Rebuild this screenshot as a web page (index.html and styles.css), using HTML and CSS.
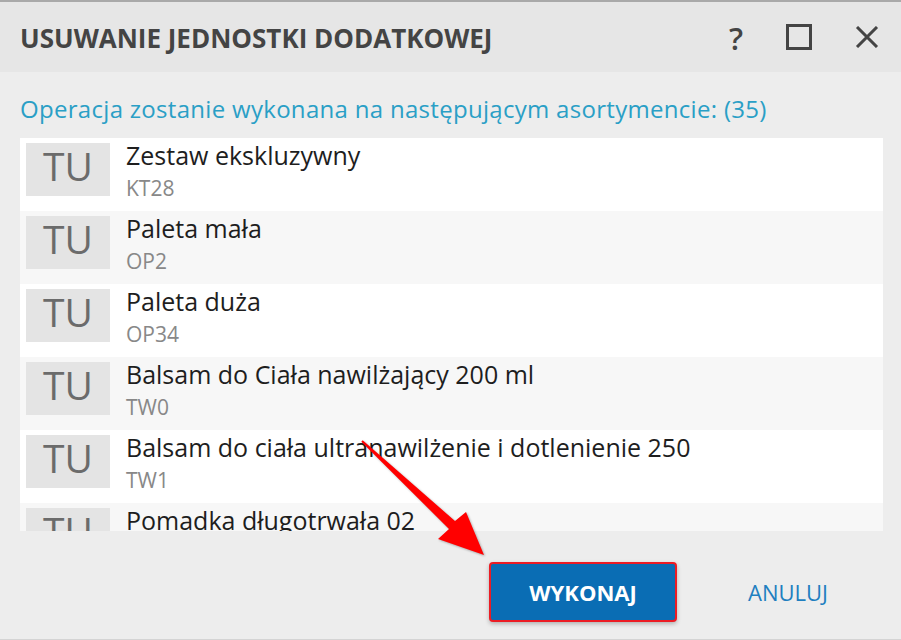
FILE: index.html
```html
<!DOCTYPE html>
<html lang="pl">
<head>
    <meta charset="UTF-8">
    <title>Usuwanie jednostki dodatkowej</title>
    <link rel="stylesheet" href="styles.css">
</head>
<body>

    <div class="dialog">
        <div class="dialog-header">
            <h1>USUWANIE JEDNOSTKI DODATKOWEJ</h1>
            <div class="header-icons">
                <span class="icon-help">?</span>
                <svg class="icon" width="26" height="26" viewBox="0 0 26 26">
                    <rect x="1.5" y="1.5" width="23" height="23" fill="none" stroke="#444" stroke-width="3"/>
                </svg>
                <svg class="icon" width="24" height="22" viewBox="0 0 24 22">
                    <path d="M2 1 L22 21 M22 1 L2 21" stroke="#444" stroke-width="3" fill="none"/>
                </svg>
            </div>
        </div>

        <div class="dialog-body">
            <p class="info">Operacja zostanie wykonana na następującym asortymencie: (35)</p>

            <div class="item-list">
                <div class="item">
                    <div class="unit">TU</div>
                    <div class="item-text">
                        <div class="item-name">Zestaw ekskluzywny</div>
                        <div class="item-code">KT28</div>
                    </div>
                </div>
                <div class="item">
                    <div class="unit">TU</div>
                    <div class="item-text">
                        <div class="item-name">Paleta mała</div>
                        <div class="item-code">OP2</div>
                    </div>
                </div>
                <div class="item">
                    <div class="unit">TU</div>
                    <div class="item-text">
                        <div class="item-name">Paleta duża</div>
                        <div class="item-code">OP34</div>
                    </div>
                </div>
                <div class="item">
                    <div class="unit">TU</div>
                    <div class="item-text">
                        <div class="item-name">Balsam do Ciała nawilżający 200 ml</div>
                        <div class="item-code">TW0</div>
                    </div>
                </div>
                <div class="item">
                    <div class="unit">TU</div>
                    <div class="item-text">
                        <div class="item-name">Balsam do ciała ultranawilżenie i dotlenienie 250</div>
                        <div class="item-code">TW1</div>
                    </div>
                </div>
                <div class="item">
                    <div class="unit">TU</div>
                    <div class="item-text">
                        <div class="item-name">Pomadka długotrwała 02</div>
                        <div class="item-code">TW2</div>
                    </div>
                </div>
            </div>
        </div>

        <div class="dialog-footer">
            <button class="btn-primary">WYKONAJ</button>
            <button class="btn-link">ANULUJ</button>
        </div>

        <!-- red annotation arrow -->
        <svg class="arrow" width="901" height="640" viewBox="0 0 901 640">
            <polygon points="362.7,440.3 455,521 466,512 484,555 438,539 449,529 361.3,441.7" fill="#ff0000"/>
        </svg>
    </div>

</body>
</html>
```

FILE: styles.css
```css
body {
    margin: 0;
    background: #ededed;
    font-family: 'Open Sans', 'Noto Sans', sans-serif;
}

.dialog {
    position: relative;
    width: 901px;
    height: 640px;
    background: #ededed;
    border-top: 2px solid #a9a9a9;
    border-bottom: 1px solid #d4d4d4;
    box-sizing: border-box;
    overflow: hidden;
}

/* Header */
.dialog-header {
    height: 70px;
    background: #e6e6e6;
    display: flex;
    align-items: center;
    justify-content: space-between;
    padding: 0 22px 0 20px;
}

.dialog-header h1 {
    margin: 2px 0 0;
    font-size: 26px;
    font-weight: 700;
    color: #444;
}

.header-icons {
    display: flex;
    align-items: center;
    gap: 43px;
}

.icon-help {
    font-size: 31px;
    font-weight: 600;
    color: #444;
    margin-top: 2px;
}

/* Body */
.dialog-body {
    padding: 21px 18px 0 20px;
}

.info {
    margin: 0 0 13px;
    font-size: 24px;
    line-height: 32px;
    letter-spacing: 0.3px;
    color: #2a9fc6;
}

.item-list {
    height: 393px;
    overflow: hidden;
}

.item {
    display: flex;
    height: 73px;
    background: #fff;
}

.item:nth-child(even) {
    background: #f7f7f7;
}

.unit {
    flex: none;
    width: 84px;
    height: 53px;
    margin: 5px 16px 0 6px;
    background: #e4e4e4;
    color: #6b6b6b;
    font-size: 39px;
    line-height: 45px;
    text-align: center;
}

.item-name {
    font-size: 25px;
    line-height: 30px;
    color: #1e1e1e;
    margin-top: 2px;
}

.item-code {
    font-size: 21px;
    line-height: 26px;
    color: #888;
    margin-top: 5px;
}

/* Footer */
.dialog-footer {
    display: flex;
    justify-content: flex-end;
    align-items: center;
    padding: 31px 0 0;
}

.btn-primary {
    width: 188px;
    height: 60px;
    background: #0a6db4;
    border: 2px solid #ec1c24;
    border-radius: 4px;
    color: #fff;
    font-family: inherit;
    font-size: 22px;
    font-weight: 700;
    box-shadow: 0 2px 4px rgba(0, 0, 0, 0.25);
}

.btn-link {
    margin: 0 73px 0 71px;
    padding: 0;
    background: none;
    border: none;
    color: #1f7fc0;
    font-family: inherit;
    font-size: 22px;
}

.arrow {
    position: absolute;
    top: -2px;
    left: 0;
    filter: drop-shadow(1px 1px 1px rgba(0, 0, 0, 0.3));
}
```
